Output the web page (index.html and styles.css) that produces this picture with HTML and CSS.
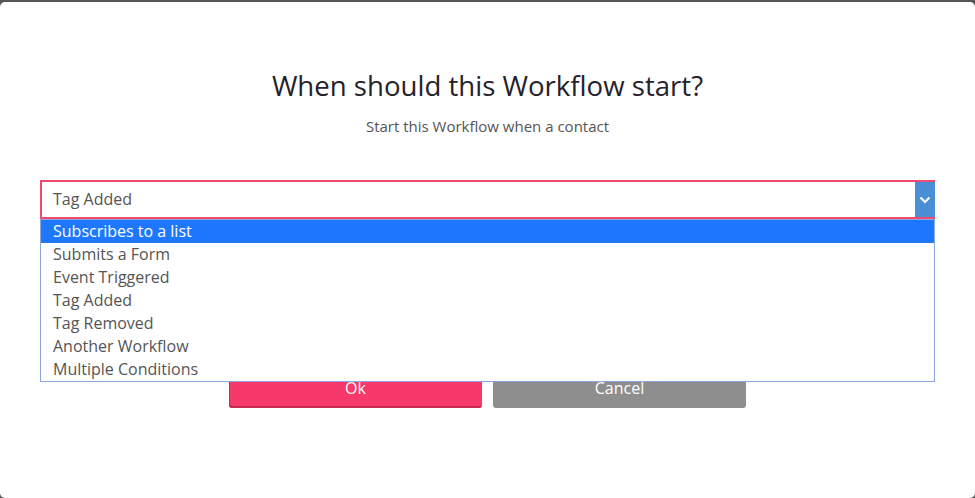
FILE: index.html
```html
<!DOCTYPE html>
<html>
<head>
<meta name="viewport" content="width=device-width, initial-scale=1.0" charset="UTF-8">
<title>Workflow start</title>
<link rel="stylesheet" href="styles.css">
</head>
<body>
<div class="modal">
	<h1 class="title">When should this Workflow start?</h1>
	<p class="subtitle">Start this Workflow when a contact</p>

	<div class="field">
		<div class="select_box">
			<span class="select_value">Tag Added</span>
			<span class="select_arrow">
				<svg width="12" height="8" viewBox="0 0 12 8"><path d="M1.5 1.5 L6 6 L10.5 1.5" fill="none" stroke="#fff" stroke-width="2.2"/></svg>
			</span>
		</div>
		<ul class="options">
			<li class="option selected">Subscribes to a list</li>
			<li class="option">Submits a Form</li>
			<li class="option">Event Triggered</li>
			<li class="option">Tag Added</li>
			<li class="option">Tag Removed</li>
			<li class="option">Another Workflow</li>
			<li class="option">Multiple Conditions</li>
		</ul>
	</div>

	<div class="actions">
		<input type="button" class="button_ok" value="Ok">
		<input type="button" class="button_cancel" value="Cancel">
	</div>
</div>
</body>
</html>
```

FILE: styles.css
```css
html, body {
  margin: 0;
  padding: 0;
  background-color: #555555;
  font-family: "Open Sans", "Noto Sans", sans-serif;
}

.modal {
  margin-top: 2px;
  height: 496px;
  background-color: #ffffff;
  border-radius: 5px;
  box-sizing: border-box;
  padding: 64px 40px 0 40px;
}

.title {
  margin: 0;
  text-align: center;
  font-size: 27.6px;
  font-weight: 400;
  line-height: 38px;
  color: #25222a;
}

.subtitle {
  margin: 12px 0 0 0;
  text-align: center;
  font-size: 15px;
  line-height: 20px;
  color: #555555;
}

.field {
  position: relative;
  margin-top: 44px;
}

.select_box {
  display: flex;
  height: 39px;
  box-sizing: border-box;
  border: 2px solid #f04a72;
  border-right: none;
  align-items: stretch;
}

.select_value {
  flex: 1;
  padding-left: 11px;
  font-size: 16px;
  line-height: 35px;
  color: #555555;
}

.select_arrow {
  width: 20px;
  background-color: #4a8ed6;
  display: flex;
  align-items: center;
  justify-content: center;
}

.options {
  position: absolute;
  left: 0;
  right: 0;
  top: 39px;
  margin: 0;
  padding: 0;
  list-style: none;
  background-color: #ffffff;
  border: 1px solid #8aa6dc;
  z-index: 2;
}

.option {
  height: 23px;
  line-height: 23px;
  padding-left: 12px;
  font-size: 16px;
  color: #555555;
}

.option.selected {
  background-color: #1e78ff;
  color: #ffffff;
}

.actions {
  display: flex;
  justify-content: center;
  gap: 11px;
  margin-top: 149px;
}

.button_ok, .button_cancel {
  width: 253px;
  height: 40px;
  border: none;
  border-radius: 3px;
  color: white;
  font-family: "Open Sans", "Noto Sans", sans-serif;
  font-size: 16px;
  text-align: center;
}

.button_ok {
  background-color: #f7386a;
  box-shadow: inset 1px -2px 0 #c42a52;
}

.button_cancel {
  background-color: #8e8e8e;
}
```
